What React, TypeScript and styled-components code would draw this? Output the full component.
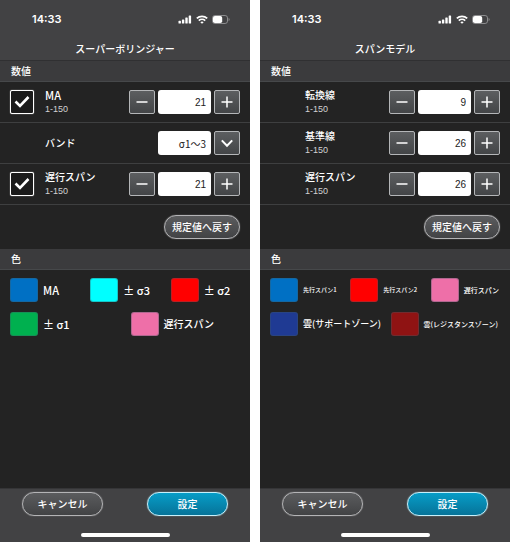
import React, { useId, useRef, useState } from "react";
import styled, { createGlobalStyle, css } from "styled-components";

const GlobalStyle = createGlobalStyle`
  * { box-sizing: border-box; }
  body { margin: 0; background: #fff; }
  body, button, input, select {
    font-family: "Noto Sans CJK JP", "Liberation Sans", sans-serif;
    font-size: 10px;
  }
  button, input, select { margin: 0; padding: 0; }
`;

const Page = styled.main`
  display: grid;
  grid-template-columns: 1fr 1fr;
  gap: 10px;
  min-height: 100vh;
`;

const Phone = styled.section`
  display: flex;
  flex-direction: column;
  min-width: 0;
  background: #232323;
  color: #fff;
`;

const TopBar = styled.header`
  background: #424244;
  border-bottom: 1px solid #303032;
`;

const StatusBar = styled.div`
  display: flex;
  align-items: center;
  justify-content: space-between;
  height: 38px;
  padding: 0 20px 0 32px;
`;

const Clock = styled.time`
  font-family: Inter, sans-serif;
  font-size: 11px;
  font-weight: 600;
`;

const StatusIcons = styled.div`
  display: flex;
  align-items: center;
  gap: 4px;
`;

const Title = styled.h1`
  margin: 0;
  height: 22px;
  font-size: 10px;
  font-weight: 500;
  line-height: 22px;
  text-align: center;
`;

const SectionTitle = styled.h2`
  margin: 0;
  height: 21px;
  padding: 0 11px;
  background: #3b3b3d;
  border-bottom: 1px solid #46484a;
  font-size: 10px;
  font-weight: 500;
  line-height: 20px;
`;

const Row = styled.div`
  display: grid;
  grid-template-columns: 24px 1fr auto;
  align-items: center;
  column-gap: 11px;
  height: 41px;
  padding: 0 10px;
  border-bottom: 1px solid #3e3f40;
`;

const CheckBox = styled.span`
  display: grid;
  width: 24px;
  height: 24px;
  > * { grid-area: 1 / 1; }
  svg {
    place-self: center;
    visibility: hidden;
    pointer-events: none;
  }
  input:checked + svg { visibility: visible; }
`;

const CheckInput = styled.input`
  appearance: none;
  width: 24px;
  height: 24px;
  border: 1px solid #fff;
  border-radius: 2px;
  background: #1b1b1b;
  box-shadow: 0 0 1px #fff;
`;

const Label = styled.label<{ $latin?: boolean }>`
  grid-column: 2;
  display: block;
  font-size: ${(p) => (p.$latin ? 11 : 10)}px;
  font-weight: 500;
  line-height: 14px;
`;

const Range = styled.small`
  display: block;
  color: #d2d2d2;
  font-family: "Liberation Sans", sans-serif;
  font-size: 9px;
  font-weight: 400;
`;

const Controls = styled.div`
  display: flex;
  gap: 3px;
`;

const SquareButton = styled.button`
  display: grid;
  place-items: center;
  width: 26px;
  height: 24px;
  border: 1px solid #b4b6b8;
  border-radius: 2px;
  background: linear-gradient(#5c5e60, #434547);
  color: #fff;
`;

const valueBox = css`
  width: 53px;
  height: 24px;
  border: 0;
  border-radius: 3px;
  background: #fff;
  color: #222;
`;

const ValueInput = styled.input`
  ${valueBox}
  padding-right: 5px;
  font-family: "Liberation Sans", sans-serif;
  text-align: right;
`;

const ValueSelect = styled.select`
  ${valueBox}
  appearance: none;
  padding-right: 5px;
  text-align: right;
  text-align-last: right;
`;

const ResetRow = styled.div`
  display: flex;
  align-items: center;
  justify-content: flex-end;
  height: 44px;
  padding: 0 10px;
`;

const PillButton = styled.button<{ $primary?: boolean }>`
  height: 24px;
  padding: 0 7px;
  border: 1px solid ${(p) => (p.$primary ? "#c5f0fb" : "#b4b4b6")};
  border-radius: 12px;
  background: ${(p) =>
    p.$primary
      ? "linear-gradient(#079dc7, #067399)"
      : "linear-gradient(#5b5c5e, #424345)"};
  box-shadow: 0 0 1px ${(p) => (p.$primary ? "#c5f0fb" : "#b4b4b6")};
  color: #fff;
  font-weight: 500;
  line-height: 20px;
`;

const Palette = styled.div`
  display: flex;
  flex-direction: column;
  gap: 10px;
  flex: 1;
  padding: 8px 0 8px 10px;
`;

const PaletteRow = styled.div<{ $columns: number }>`
  display: grid;
  grid-template-columns: repeat(${(p) => p.$columns}, minmax(0, 1fr));
  column-gap: 1px;
`;

const ColorItem = styled.label<{ $size: number }>`
  display: flex;
  align-items: center;
  gap: 5px;
  font-size: ${(p) => p.$size}px;
  font-weight: 500;
  line-height: 24px;
  white-space: nowrap;
`;

const Swatch = styled.button<{ $color: string }>`
  flex: none;
  width: 28px;
  height: 24px;
  border: 1px solid rgba(60, 90, 100, 0.35);
  border-radius: 3px;
  background: ${(p) => p.$color};
`;

const Footer = styled.footer`
  background: #424244;
  border-top: 1px solid #353537;
  padding: 3px 22px 5px;
`;

const FooterActions = styled.div`
  display: flex;
  justify-content: space-between;
  ${PillButton} { width: 81px; }
`;

const HomeIndicator = styled.div`
  width: 89px;
  height: 4px;
  margin: 17px auto 0;
  border-radius: 2px;
  background: #fff;
`;

const PlusIcon = () => (
  <svg width="12" height="12" viewBox="0 0 12 12" stroke="currentColor" strokeWidth="1.5" aria-hidden="true">
    <path d="M6 .5v11M.5 6h11" />
  </svg>
);

const MinusIcon = () => (
  <svg width="12" height="12" viewBox="0 0 12 12" stroke="currentColor" strokeWidth="1.5" aria-hidden="true">
    <path d="M.5 6h11" />
  </svg>
);

const ChevronIcon = () => (
  <svg width="12" height="12" viewBox="0 0 12 12" fill="none" stroke="currentColor" strokeWidth="2" aria-hidden="true">
    <path d="M.8 3.4 6 8.8l5.2-5.4" />
  </svg>
);

const CheckIcon = () => (
  <svg width="16" height="14" viewBox="0 0 16 14" fill="none" stroke="#fff" strokeWidth="2.6" aria-hidden="true">
    <path d="M1.5 6.5 6 11l8.5-9" />
  </svg>
);

const SignalIcon = () => (
  <svg width="14" height="9" viewBox="0 0 14 9" fill="#fff" aria-hidden="true">
    <rect x="0.5" y="5.8" width="2.4" height="2.7" rx=".6" />
    <rect x="3.9" y="4.4" width="2.4" height="4.1" rx=".6" />
    <rect x="7.3" y="2.5" width="2.4" height="6" rx=".6" />
    <rect x="10.7" y="0.5" width="2.4" height="8" rx=".6" />
  </svg>
);

const WifiIcon = () => (
  <svg width="12" height="9" viewBox="0 0 12 9" fill="none" stroke="#fff" strokeWidth="1.7" aria-hidden="true">
    <path d="M.8 3.4a7.6 7.6 0 0 1 10.4 0M2.8 5.6a4.7 4.7 0 0 1 6.4 0" />
    <path d="M6 8.8 4.3 7.2a2.5 2.5 0 0 1 3.4 0Z" fill="#fff" stroke="none" />
  </svg>
);

const BatteryIcon = () => (
  <svg width="18" height="9" viewBox="0 0 18 9" aria-hidden="true">
    <rect x=".5" y=".5" width="15" height="8" rx="2.4" fill="none" stroke="#8c8c8e" />
    <rect x="1" y="1" width="9.2" height="7" rx="1.8" fill="#fff" />
    <path d="M16.6 3v3c.8-.3 1-.9 1-1.5s-.2-1.2-1-1.5Z" fill="#8c8c8e" />
  </svg>
);

type Setting = { label: string; value: number; checkable?: boolean; latin?: boolean };
type Color = { label: string; color: string; size: number };

function NumberRow({ label, value, checkable, latin }: Setting) {
  const id = useId();
  const [current, setCurrent] = useState(value);
  const change = (n: number) => setCurrent(Math.min(150, Math.max(1, n)));
  return (
    <Row>
      {checkable && (
        <CheckBox>
          <CheckInput type="checkbox" defaultChecked aria-label={label} />
          <CheckIcon />
        </CheckBox>
      )}
      <Label htmlFor={id} $latin={latin}>
        {label}
        <Range>1-150</Range>
      </Label>
      <Controls>
        <SquareButton type="button" aria-label={`${label} −`} onClick={() => change(current - 1)}>
          <MinusIcon />
        </SquareButton>
        <ValueInput
          id={id}
          inputMode="numeric"
          value={current}
          onChange={(e) => change(Number(e.target.value) || 1)}
        />
        <SquareButton type="button" aria-label={`${label} +`} onClick={() => change(current + 1)}>
          <PlusIcon />
        </SquareButton>
      </Controls>
    </Row>
  );
}

function BandRow() {
  const id = useId();
  const select = useRef<HTMLSelectElement>(null);
  return (
    <Row>
      <Label htmlFor={id}>バンド</Label>
      <Controls>
        <ValueSelect id={id} ref={select}>
          <option>σ1〜3</option>
        </ValueSelect>
        <SquareButton type="button" aria-label="バンド" onClick={() => select.current?.showPicker()}>
          <ChevronIcon />
        </SquareButton>
      </Controls>
    </Row>
  );
}

function ColorRow({ colors }: { colors: Color[] }) {
  const id = useId();
  return (
    <PaletteRow $columns={colors.length}>
      {colors.map((c, i) => (
        <ColorItem key={c.label} $size={c.size} htmlFor={`${id}${i}`}>
          <Swatch type="button" id={`${id}${i}`} $color={c.color} />
          {c.label}
        </ColorItem>
      ))}
    </PaletteRow>
  );
}

function SettingsScreen(props: { title: string; palette: Color[][]; children: React.ReactNode }) {
  return (
    <Phone>
      <TopBar>
        <StatusBar>
          <Clock>14:33</Clock>
          <StatusIcons>
            <SignalIcon />
            <WifiIcon />
            <BatteryIcon />
          </StatusIcons>
        </StatusBar>
        <Title>{props.title}</Title>
      </TopBar>
      <SectionTitle>数値</SectionTitle>
      {props.children}
      <ResetRow>
        <PillButton type="button">規定値へ戻す</PillButton>
      </ResetRow>
      <SectionTitle>色</SectionTitle>
      <Palette>
        {props.palette.map((colors, i) => (
          <ColorRow key={i} colors={colors} />
        ))}
      </Palette>
      <Footer>
        <FooterActions>
          <PillButton type="button">キャンセル</PillButton>
          <PillButton type="button" $primary>設定</PillButton>
        </FooterActions>
        <HomeIndicator />
      </Footer>
    </Phone>
  );
}

const bollingerColors: Color[][] = [
  [
    { label: "MA", color: "#0070c4", size: 11 },
    { label: "± σ3", color: "#00ffff", size: 11 },
    { label: "± σ2", color: "#ff0000", size: 11 },
  ],
  [
    { label: "± σ1", color: "#00b04f", size: 11 },
    { label: "遅行スパン", color: "#ee6fa8", size: 10 },
  ],
];

const spanColors: Color[][] = [
  [
    { label: "先行スパン1", color: "#0070c4", size: 6 },
    { label: "先行スパン2", color: "#ff0000", size: 6 },
    { label: "遅行スパン", color: "#ee6fa8", size: 7 },
  ],
  [
    { label: "雲(サポートゾーン)", color: "#1f3a93", size: 9 },
    { label: "雲(レジスタンスゾーン)", color: "#8f1313", size: 7 },
  ],
];

export default function App() {
  return (
    <>
      <GlobalStyle />
      <Page>
        <SettingsScreen title="スーパーボリンジャー" palette={bollingerColors}>
          <NumberRow label="MA" value={21} checkable latin />
          <BandRow />
          <NumberRow label="遅行スパン" value={21} checkable />
        </SettingsScreen>
        <SettingsScreen title="スパンモデル" palette={spanColors}>
          <NumberRow label="転換線" value={9} />
          <NumberRow label="基準線" value={26} />
          <NumberRow label="遅行スパン" value={26} />
        </SettingsScreen>
      </Page>
    </>
  );
}
